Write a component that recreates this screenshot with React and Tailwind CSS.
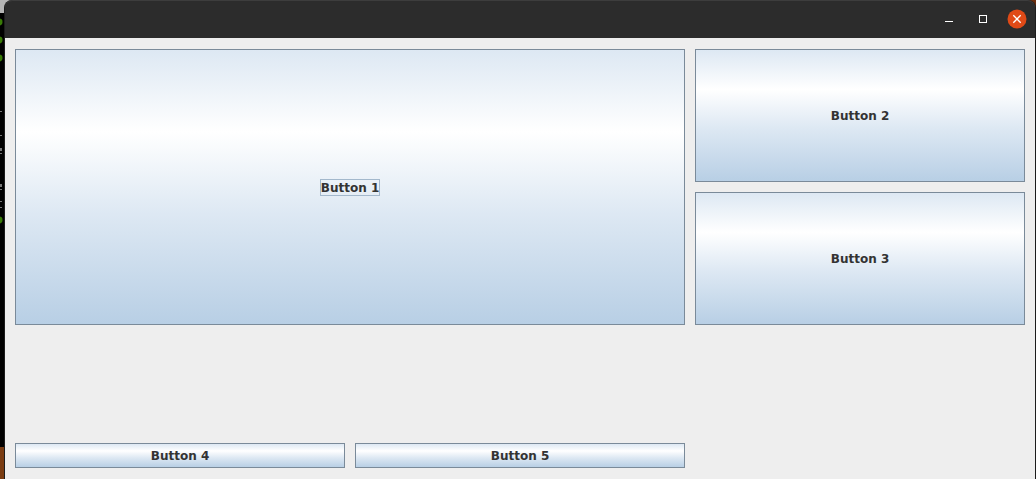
const face =
  "rounded-none border border-[#7a8a99] bg-[linear-gradient(to_bottom,#dde8f3_0%,#ffffff_30%,#dde8f3_60%,#b8cfe5_100%)] font-['DejaVu_Sans',sans-serif] text-[12px] leading-[14px] font-bold text-[#333333] flex items-center justify-center outline-none";

function PanelButton({ label, place, focused }) {
  return (
    <button type="button" className={`${face} ${place}`}>
      <span className={focused ? "border border-[#a3b8cc] pt-px" : "border border-transparent pt-px"}>{label}</span>
    </button>
  );
}

function TerminalEdge() {
  return (
    <svg aria-hidden="true" className="w-1 h-full shrink-0 overflow-hidden" preserveAspectRatio="none">
      <rect width="4" height="100%" fill="#000000" />
      <rect width="4" height="13" fill="#b5b5b5" />
      <rect y="447" width="4" height="100%" fill="#7a3c12" />
      <g fill="#387a06">
        <circle cx="-1" cy="22" r="3.5" />
        <circle cx="-1" cy="40" r="3.5" />
        <circle cx="-1" cy="58" r="3.5" />
        <circle cx="-1" cy="220" r="3.5" />
      </g>
      <g fill="#777777">
        <rect y="111" width="2" height="1" />
        <rect y="135" width="2" height="1" />
        <rect y="148" width="2" height="3" />
        <rect y="153" width="2" height="1" />
        <rect y="184" width="2" height="3" />
        <rect y="189" width="2" height="1" />
        <rect y="201" width="2" height="1" />
        <rect y="207" width="2" height="1" />
      </g>
    </svg>
  );
}

function TitleBar() {
  return (
    <header className="flex h-[38px] shrink-0 items-center justify-end gap-[14px] rounded-t-lg border-t border-[#3d3d3d] bg-[#2c2c2c] pr-2 pb-px">
      <button type="button" aria-label="Minimize" className="flex size-5 items-center justify-center">
        <svg width="20" height="20" aria-hidden="true"><rect x="6" y="12" width="8" height="1" fill="#ffffff" /></svg>
      </button>
      <button type="button" aria-label="Maximize" className="flex size-5 items-center justify-center">
        <svg width="20" height="20" aria-hidden="true"><rect x="6.5" y="6.5" width="7" height="7" fill="none" stroke="#ffffff" /></svg>
      </button>
      <button type="button" aria-label="Close" className="flex size-5 items-center justify-center">
        <svg width="20" height="20" aria-hidden="true">
          <circle cx="10" cy="10" r="9.5" fill="#e04a17" />
          <path d="M6.3 6.3 L13.7 13.7 M13.7 6.3 L6.3 13.7" stroke="#ffffff" strokeWidth="1.3" />
        </svg>
      </button>
    </header>
  );
}

export default function App() {
  return (
    <div className="flex h-screen bg-[linear-gradient(to_right,#b5b5b5_0px,#b5b5b5_20px,#1f1f1f_40px,#1f1f1f_600px,#2e160c_700px,#6b2c0c_100%)]">
      <TerminalEdge />
      <div className="flex min-w-0 grow flex-col rounded-t-lg border-x border-[#1c1c1c] bg-[#2c2c2c]">
        <TitleBar />
        <main className="grid grow grid-cols-3 grid-rows-[133fr_133fr_98fr_25px] gap-[10px] bg-[#eeeeee] px-[10px] py-[11px]">
          <PanelButton label="Button 1" place="col-span-2 row-span-2" focused />
          <PanelButton label="Button 2" place="col-start-3 row-start-1" />
          <PanelButton label="Button 3" place="col-start-3 row-start-2" />
          <PanelButton label="Button 4" place="col-start-1 row-start-4" />
          <PanelButton label="Button 5" place="col-start-2 row-start-4" />
        </main>
      </div>
    </div>
  );
}
